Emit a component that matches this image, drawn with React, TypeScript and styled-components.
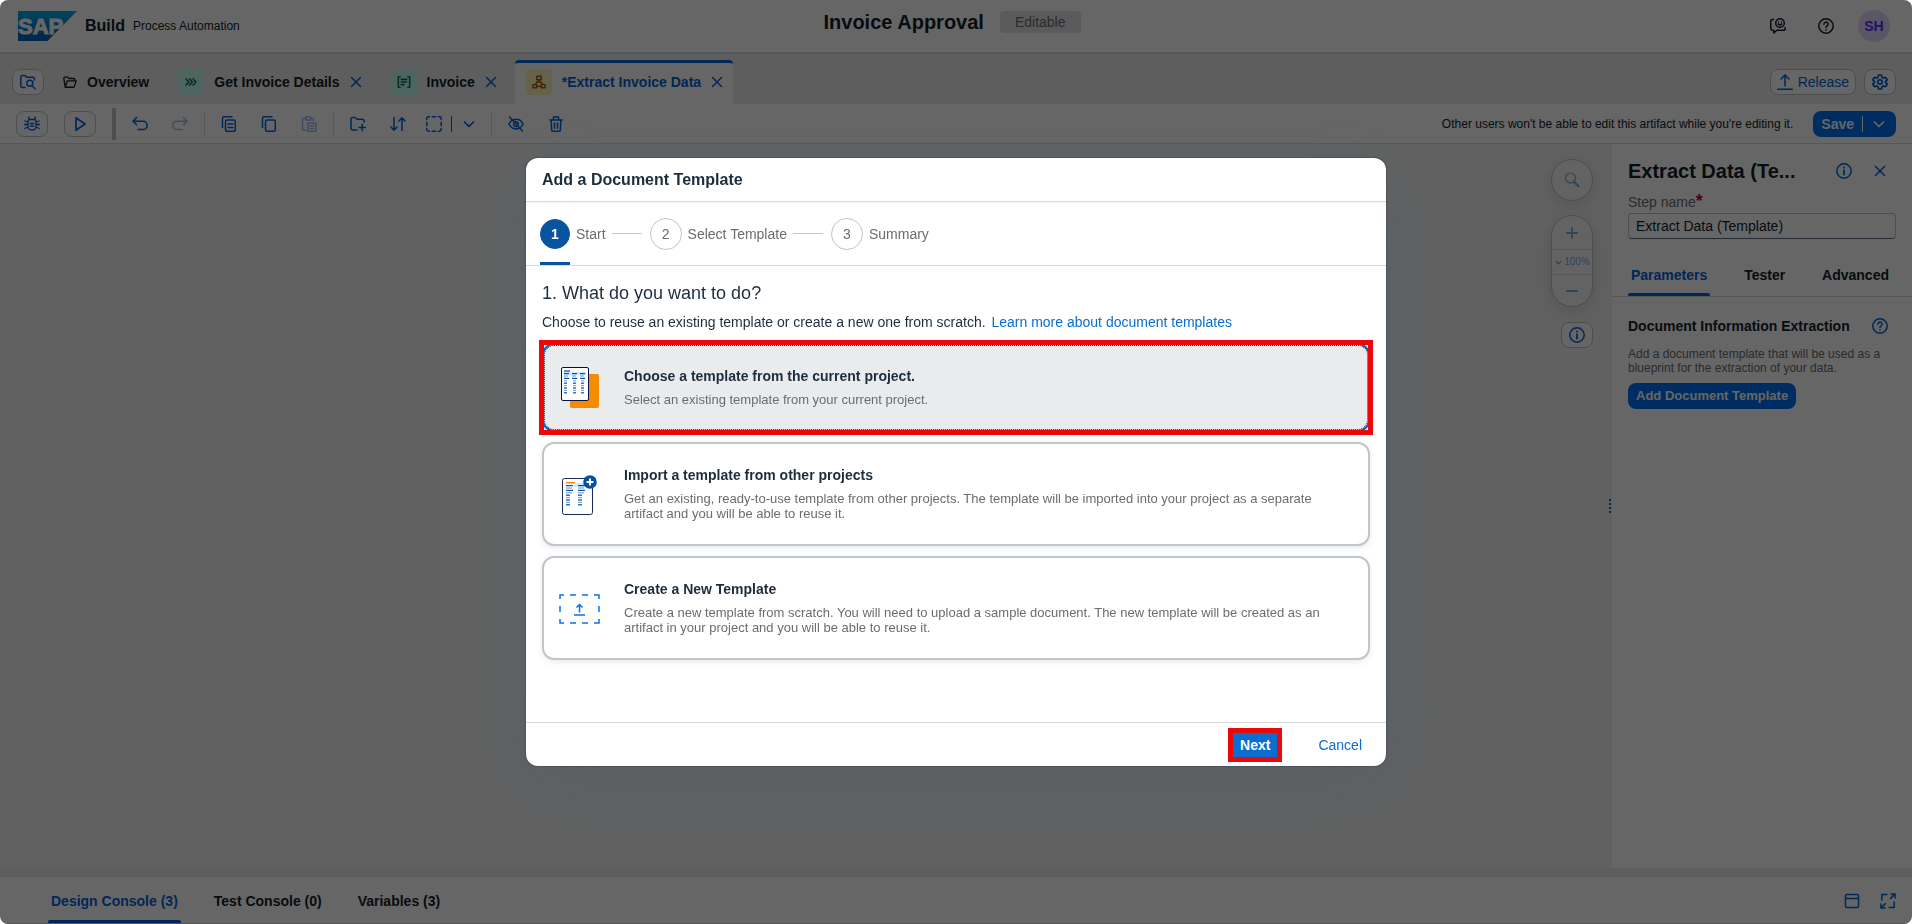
import React from 'react';
import styled, { createGlobalStyle, css } from 'styled-components';

const color = {
  text: '#131e29',
  link: '#0064d9',
  label: '#6a6d70',
  line: '#d9d9d9',
  buttonBorder: '#bcc3ca',
  shell: '#ebebeb',
  canvas: '#f2f2f2',
};

const GlobalStyle = createGlobalStyle`
  *, *::before, *::after { box-sizing: border-box; }
  body {
    margin: 0;
    background: #fff;
    color: ${color.text};
    font: 14px/16px "Liberation Sans", Arial, sans-serif;
  }
  button, input { font: inherit; color: inherit; margin: 0; }
  button { padding: 0; border: 0; background: none; cursor: pointer; }
  h1, h2, h3, p { margin: 0; font: inherit; }
`;

/* ---------- icons ---------- */

type IconProps = { size?: number; children: React.ReactNode; weight?: number };

const Icon = ({ size = 16, weight = 1.5, children }: IconProps) => (
  <svg
    width={size}
    height={size}
    viewBox="0 0 16 16"
    fill="none"
    stroke="currentColor"
    strokeWidth={weight}
    strokeLinecap="round"
    strokeLinejoin="round"
    aria-hidden="true"
  >
    {children}
  </svg>
);

const FolderSearchIcon = () => (
  <Icon>
    <path d="M5 13.500H2.200A1.400 1.400 0 0 1 .8 12V3A1.400 1.400 0 0 1 2.200 1.600H5L6.800 3.300H13A1.400 1.400 0 0 1 14.400 4.700V6" />
    <circle cx="9.800" cy="9.300" r="3" />
    <path d="M12 11.600 15.200 15" />
  </Icon>
);
const FolderOpenIcon = () => (
  <Icon size={14}>
    <path d="M2.500 14 1 4.500V3.500A1 1 0 0 1 2 2.500H5.500L7 4H12.500A1 1 0 0 1 13.500 5V6.500M2.500 14 4.500 7.500A1 1 0 0 1 5.500 6.700H15L13 13.300A1 1 0 0 1 12 14Z" />
  </Icon>
);
const ChevronsIcon = () => (
  <Icon size={14} weight={1.8}>
    <path d="M2.500 4.500 5.500 8 2.500 11.500M6.500 4.500 9.500 8 6.500 11.500M10.500 4.500 13.500 8 10.500 11.500" />
  </Icon>
);
const FormIcon = () => (
  <Icon size={14} weight={1.8}>
    <path d="M3.500 2H1.500V14H3.500M12.500 2H14.500V14H12.500M5 5H11M5 8H11M5 11H8" />
  </Icon>
);
const HierarchyIcon = () => (
  <Icon size={14} weight={1.7}>
    <path d="M5.500 1.500H10.500V5.500H5.500ZM1 11H5.500V14.500H1ZM10.500 11H15V14.500H10.500ZM8 5.500V8M8 8H6L3.500 11M8 8H10L12.500 11M5.500 13H10.500" />
  </Icon>
);
const CloseIcon = () => (
  <Icon size={12} weight={2}>
    <path d="M2 2 14 14M14 2 2 14" />
  </Icon>
);
const FeedbackIcon = () => (
  <Icon>
    <circle cx="10" cy="5" r="4.300" />
    <path d="M8.600 4V4.100M11.400 4V4.100M8.300 5.900Q10 7.800 11.700 5.900M3.500 1.500H2.300A1.600 1.600 0 0 0 .8 3V10.800A1.600 1.600 0 0 0 2.300 12.300H3.800V15L6.800 12.300H13.500A1.600 1.600 0 0 0 15.200 10.700V9.500" />
  </Icon>
);
const HelpIcon = () => (
  <Icon>
    <circle cx="8" cy="8" r="7.200" />
    <path d="M5.900 6.300A2.100 2.100 0 1 1 8.900 8.100Q8 8.600 8 9.500M8 11.700V11.900" />
  </Icon>
);
const InfoIcon = () => (
  <Icon>
    <circle cx="8" cy="8" r="7.200" />
    <path d="M8 7.500V11.600M8 4.500V4.700" strokeWidth="1.800" />
  </Icon>
);
const ReleaseIcon = () => (
  <Icon>
    <path d="M.8 15.300H15.200M8 12V1M4 5 8 .9 12 5" />
  </Icon>
);
const SettingsIcon = () => (
  <Icon weight={1.7}>
    <path d="M6.500 1H9.500L10 3.200 11.500 4.100 13.700 3.400 15.200 6 13.500 7.500V8.500L15.200 10 13.700 12.600 11.500 11.900 10 12.800 9.500 15H6.500L6 12.800 4.500 11.900 2.300 12.600 .8 10 2.500 8.500V7.500L.8 6 2.300 3.400 4.500 4.100 6 3.200Z" />
    <circle cx="8" cy="8" r="2.200" />
  </Icon>
);
const BugIcon = () => (
  <Icon weight={1.3}>
    <path d="M4 5.500Q4 3.500 6 3.500H10Q12 3.500 12 5.500V10.500Q12 14 8 14Q4 14 4 10.500ZM5.500 3.500 4.500 1M10.500 3.500 11.500 1M.8 5 4 6M15.200 5 12 6M.5 8.500H4M15.500 8.500H12M.8 12.500 4 11M15.200 12.500 12 11M6.300 7.500H9.700M6.300 10H9.700" />
  </Icon>
);
const PlayIcon = () => (
  <Icon weight={1.7}>
    <path d="M4 1.800V14.200L13 8Z" />
  </Icon>
);
const UndoIcon = () => (
  <Icon>
    <path d="M4.500 1.500 1 5.200 4.500 8.800M1 5.200H11A4 4 0 0 1 11 13.600H6" />
  </Icon>
);
const RedoIcon = () => (
  <Icon>
    <path d="M11.500 1.500 15 5.200 11.500 8.800M15 5.200H5A4 4 0 0 0 5 13.600H10" />
  </Icon>
);
const CopyDetailIcon = () => (
  <Icon>
    <rect x="4.500" y="4" width="9.800" height="11.200" rx="1.500" />
    <path d="M1.500 11.500V2.500Q1.500.8 3.200.8H11M7 8H12M7 11.500H12" />
  </Icon>
);
const CopyIcon = () => (
  <Icon>
    <rect x="4.500" y="4" width="9.800" height="11.200" rx="1.500" />
    <path d="M1.500 11.500V2.500Q1.500.8 3.200.8H11" />
  </Icon>
);
const PasteIcon = () => (
  <Icon>
    <path d="M4.500 14.300H2.500A1 1 0 0 1 1.500 13.300V3.500A1 1 0 0 1 2.500 2.500H4.500M10 2.500H11.500A1 1 0 0 1 12.500 3.500V4.500M4.800 1H9.800V4H4.800ZM7 7H14.800V15.200H7ZM9.300 9.800H12.500M9.300 12.400H12.500" />
  </Icon>
);
const FolderAddIcon = () => (
  <Icon>
    <path d="M7 14H2.500A1.500 1.500 0 0 1 1 12.500V3A1.500 1.500 0 0 1 2.500 1.500H5L7 3.300H12.500A1.500 1.500 0 0 1 14 4.800V6M9 11.500H15.500M12.200 8.300V14.800" />
  </Icon>
);
const SortIcon = () => (
  <Icon>
    <path d="M4 1.500V14M1 11 4 14.200 7 11M12 14.500V2M9 5 12 1.800 15 5" />
  </Icon>
);
const SelectionIcon = () => (
  <Icon>
    <path d="M.8 3.500V2.500A1.700 1.700 0 0 1 2.500.8H3.500M6.300 .8H9.700M12.500.8H13.500A1.700 1.700 0 0 1 15.200 2.500V3.500M15.200 6.300V9.700M15.200 12.500V13.500A1.700 1.700 0 0 1 13.500 15.200H12.500M9.700 15.200H6.300M3.500 15.200H2.500A1.700 1.700 0 0 1 .8 13.500V12.500M.8 9.700V6.300" />
  </Icon>
);
const ChevronDownIcon = ({ size = 16, weight = 1.7 }: { size?: number; weight?: number }) => (
  <Icon size={size} weight={weight}>
    <path d="M3.500 6 8 10.500 12.500 6" />
  </Icon>
);
const HideIcon = () => (
  <Icon>
    <path d="M1.500 1 14.500 15M5.500 3.800Q12 1.500 15 8Q14.300 9.800 13 11M3.300 5Q1.800 6.300 1 8Q4.300 14.300 10.500 12.500M7.300 5.800A2.400 2.400 0 0 1 10.300 8.600M5.700 7.500A2.400 2.400 0 0 0 8.800 10.400" />
  </Icon>
);
const TrashIcon = () => (
  <Icon>
    <path d="M2 4H14M5.500 4V1H10.500V4M3.200 4 3.600 14A1.200 1.200 0 0 0 4.800 15.200H11.200A1.200 1.200 0 0 0 12.400 14L12.800 4M6.500 7V12.300M9.500 7V12.300" />
  </Icon>
);
const SearchIcon = () => (
  <Icon weight={1.2}>
    <circle cx="6.500" cy="6" r="5" />
    <path d="M10 9.800 14.500 14.300" strokeWidth="2.200" />
  </Icon>
);
const PlusIcon = () => (
  <Icon weight={1.8}>
    <path d="M3 8H13M8 3V13" />
  </Icon>
);
const MinusIcon = () => (
  <Icon weight={1.8}>
    <path d="M3 8H13" />
  </Icon>
);
const DockIcon = () => (
  <Icon>
    <path d="M1.500 3A1.500 1.500 0 0 1 3 1.500H13A1.500 1.500 0 0 1 14.500 3V13A1.500 1.500 0 0 1 13 14.500H3A1.500 1.500 0 0 1 1.500 13ZM1.500 5.500H14.500" />
  </Icon>
);
const FullScreenIcon = () => (
  <Icon>
    <path d="M7 1.500H1.800V7M9 14.500H14.200V9M10.500 5.500 15 1M11 1H15V5M5.500 10.500 1 15M1 11V15H5" />
  </Icon>
);

const SapLogo = () => (
  <svg width="59" height="30" viewBox="0 0 59 30" role="img" aria-label="SAP">
    <defs>
      <linearGradient id="sap" x1="0" y1="0" x2="0" y2="1">
        <stop offset="0" stopColor="#00aeef" />
        <stop offset="1" stopColor="#005eb8" />
      </linearGradient>
    </defs>
    <path d="M0 0H59L29.500 30H0Z" fill="url(#sap)" />
    <text x="0" y="23" fill="#fff" stroke="#fff" strokeWidth="1" fontSize="22" fontWeight="700">SAP</text>
  </svg>
);

const rowY = [0, 1, 2, 3, 4, 5, 6, 7, 8];

const TemplateIcon = () => (
  <svg width="48" height="48" viewBox="0 0 48 48" aria-hidden="true">
    <rect x="14" y="10" width="29" height="34" rx="2" fill="#f58b00" />
    <rect x="5.500" y="3.500" width="27" height="33" rx="1.500" fill="#fff" stroke="#00144a" />
    <rect x="8" y="6" width="6" height="2" fill="#5b8fd0" />
    <rect x="8" y="8" width="22" height="3" fill="#cfeafc" />
    {[8, 16, 24].map((x) =>
      rowY.map((r) => (
        <rect key={`${x}-${r}`} x={x + (x > 8 && r > 2 ? 1 : 0)} y={9 + r * 2.4} width={r < 3 ? 5 - (r % 2) : 3} height="1.200" fill={r % 2 ? '#7aa5d8' : '#0a50a0'} />
      )),
    )}
  </svg>
);
const ImportIcon = () => (
  <svg width="48" height="48" viewBox="0 0 48 48" aria-hidden="true">
    <rect x="6.500" y="8.500" width="30" height="36" rx="2" fill="#fff" stroke="#1b2a5c" />
    <rect x="10" y="12" width="9" height="1.500" fill="#f58b00" />
    <rect x="18" y="13" width="10" height="4" fill="#cfeafc" />
    {[10, 22].map((x) =>
      rowY.map((r) => (
        <rect key={`${x}-${r}`} x={x} y={15 + r * 2.4} width={r < 4 ? 7 - (r % 2) : 4} height="1.200" fill={r % 2 ? '#7aa5d8' : '#0a50a0'} />
      )),
    )}
    <circle cx="34" cy="12" r="6.800" fill="#0050a8" />
    <path d="M34 8.500V15.500M30.500 12H37.500" stroke="#fff" strokeWidth="2" />
  </svg>
);
const UploadIcon = () => (
  <svg width="48" height="48" viewBox="0 0 48 48" fill="none" stroke="#0a72e8" strokeWidth="1.500" aria-hidden="true">
    <path d="M4 15V11H8M14 11H20M26 11H32M38 11H43V15M43 22V28M43 35V39H38M32 39H26M20 39H14M8 39H4V35M4 28V22M18 31H29M23.500 28.500V21M20.500 23.500 23.500 20.500 26.500 23.500" />
  </svg>
);

/* ---------- application shell ---------- */

const Shell = styled.div`
  min-height: 100vh;
  display: flex;
  flex-direction: column;
  border-radius: 8px;
  overflow: hidden;
  background: ${color.shell};
`;

const Header = styled.header`
  height: 54px;
  padding: 0 22px 1px 18px;
  display: grid;
  grid-template-columns: 1fr auto 1fr;
  align-items: center;
  background: #fff;
  border-bottom: 2px solid #d6d6d6;
`;

const Brand = styled.div`
  display: flex;
  align-items: center;
  gap: 8px;
`;

const BrandName = styled.span`
  font-size: 16px;
  font-weight: 700;
`;

const BrandProduct = styled.span`
  font-size: 12px;
`;

const ProjectTitle = styled.div`
  align-self: start;
  padding: 11px 4px 0 0;
  display: flex;
  align-items: center;
  gap: 16px;
`;

const Title = styled.h1`
  font-size: 20px;
  line-height: 22px;
  font-weight: 700;
`;

const Badge = styled.span`
  padding: 3px 15px;
  border-radius: 4px;
  background: #e3e3e3;
  color: ${color.label};
`;

const HeaderActions = styled.div`
  display: flex;
  justify-content: flex-end;
  align-items: center;
  gap: 16px;
`;

const Avatar = styled.button`
  width: 32px;
  height: 32px;
  border-radius: 50%;
  background: #e2d8ff;
  color: #552cff;
  font-weight: 700;
`;

const IconButton = styled.button<{ $outlined?: boolean; $tone?: string }>`
  width: 32px;
  height: 26px;
  flex: none;
  display: inline-flex;
  align-items: center;
  justify-content: center;
  color: ${(p) => p.$tone ?? color.link};
  border-radius: 8px;
  ${(p) => p.$outlined && css`
    background: #fff;
    border: 1px solid ${color.buttonBorder};
  `}
  &:disabled { opacity: 0.4; }
`;

const BareIconButton = styled.button`
  display: flex;
  color: ${color.link};
`;

/* ---------- artifact tabs ---------- */

const TabBar = styled.nav`
  height: 50px;
  padding: 6px 16px 0 12px;
  display: flex;
  align-items: stretch;
`;

const CenteredGroup = styled.div<{ $gap: number }>`
  display: flex;
  align-items: center;
  gap: ${(p) => p.$gap}px;
`;

const Tabs = styled.div`
  flex: 1;
  display: flex;
  gap: 8px;
  padding-left: 8px;
`;

const Tab = styled.div<{ $active?: boolean }>`
  display: flex;
  align-items: center;
  gap: 10px;
  padding: 0 10px 0 11px;
  border-radius: 4px 4px 0 0;
  border-top: 3px solid ${(p) => (p.$active ? color.link : 'transparent')};
  border-bottom: 3px solid transparent;
  background: ${(p) => (p.$active ? '#fff' : 'transparent')};
  color: ${(p) => (p.$active ? color.link : color.text)};
`;

const TabLabel = styled.button`
  display: flex;
  align-items: center;
  gap: 10px;
  font-weight: 700;
`;

const badgeTone = {
  mint: ['#c2fcee', '#036c62'],
  yellow: ['#fff3b8', '#a45d00'],
};

const TypeBadge = styled.span<{ $tone: keyof typeof badgeTone }>`
  width: 26px;
  height: 26px;
  display: grid;
  place-items: center;
  border-radius: 4px;
  background: ${(p) => badgeTone[p.$tone][0]};
  color: ${(p) => badgeTone[p.$tone][1]};
`;

const OutlinedButton = styled.button`
  height: 26px;
  padding: 0 6px;
  display: flex;
  align-items: center;
  gap: 5px;
  border: 1px solid ${color.buttonBorder};
  border-radius: 8px;
  background: #fff;
  color: ${color.link};
`;

/* ---------- toolbar ---------- */

const Toolbar = styled.div`
  height: 40px;
  padding: 0 16px;
  display: flex;
  align-items: center;
  gap: 8px;
  background: #fff;
  border-bottom: 1px solid ${color.line};
`;

const RunGroup = styled.div`
  display: flex;
  align-items: center;
  gap: 16px;
`;

const Grip = styled.span`
  width: 4px;
  height: 32px;
  background: #c4c4c4;
`;

const Separator = styled.span`
  width: 1px;
  height: 24px;
  background: ${color.line};
`;

const SplitButton = styled.div`
  display: flex;
  align-items: center;
  gap: 9px;
  padding: 0 6px 0 4px;
  color: ${color.link};
`;

const SplitPart = styled.button`
  display: flex;
  align-items: center;
`;

const SplitLine = styled.span`
  width: 1px;
  height: 16px;
  background: currentColor;
`;

const Notice = styled.p`
  flex: 1;
  padding-right: 12px;
  font-size: 12px;
  text-align: right;
`;

const SaveButton = styled.div`
  height: 26px;
  padding: 0 9px 0 8px;
  display: flex;
  align-items: center;
  gap: 8px;
  border-radius: 8px;
  background: #0070f2;
  color: #fff;
  font-weight: 700;
`;

/* ---------- workspace ---------- */

const Workspace = styled.main`
  flex: 1;
  display: flex;
`;

const Canvas = styled.section`
  flex: 1;
  display: flex;
  justify-content: flex-end;
  background: ${color.canvas};
`;

const CanvasTools = styled.div`
  display: flex;
  flex-direction: column;
  align-items: flex-end;
  padding: 15px 16px 0 0;
`;

const SearchButton = styled.button`
  width: 42px;
  height: 42px;
  margin-bottom: 14px;
  display: grid;
  place-items: center;
  border: 1px solid ${color.buttonBorder};
  border-radius: 50%;
  background: #f7f7f7;
  color: #7ba7dd;
  box-shadow: 0 4px 16px rgba(34, 53, 72, 0.15);
`;

const ZoomControl = styled.div`
  width: 42px;
  margin-bottom: 15px;
  display: flex;
  flex-direction: column;
  border: 1px solid ${color.buttonBorder};
  border-radius: 21px;
  background: #f7f7f7;
  color: #7ba7dd;
  box-shadow: 0 4px 16px rgba(34, 53, 72, 0.15);
`;

const ZoomButton = styled.button<{ $height: number }>`
  height: ${(p) => p.$height}px;
  display: flex;
  align-items: center;
  justify-content: center;
  gap: 1px;
  font-size: 10px;
  & + & { border-top: 1px solid ${color.line}; }
`;

const Splitter = styled.div`
  width: 3px;
  align-self: center;
  display: flex;
  flex-direction: column;
  gap: 2px;
`;

const Dot = styled.span`
  width: 2px;
  height: 2px;
  background: ${color.link};
`;

const Panel = styled.aside`
  width: 300px;
  flex: none;
  background: #fff;
`;

const PanelHead = styled.div`
  padding: 14px 16px 0;
`;

const PanelTitleRow = styled.div`
  display: flex;
  align-items: center;
  gap: 4px;
`;

const PanelTitle = styled.h2`
  flex: 1;
  font-size: 20px;
  line-height: 26px;
  font-weight: 700;
`;

const FieldLabel = styled.label`
  display: block;
  margin: 11px 0 3px;
  color: ${color.label};
  line-height: 15px;
`;

const Required = styled.span`
  color: #aa0840;
  font-size: 18px;
  line-height: 12px;
  font-weight: 700;
`;

const TextInput = styled.input`
  width: 100%;
  height: 26px;
  padding: 0 7px;
  border: 1px solid ${color.buttonBorder};
  border-bottom-color: #556b81;
  border-radius: 4px;
  background: #fff;
`;

const PanelTabs = styled.div`
  margin-top: 14px;
  padding: 0 20px 0 16px;
  height: 44px;
  display: flex;
  justify-content: space-between;
  border-bottom: 1px solid ${color.line};
`;

const UnderlineTab = styled.button<{ $active?: boolean }>`
  position: relative;
  padding: 0 3px;
  font-weight: 700;
  color: ${(p) => (p.$active ? color.link : color.text)};
  &::after {
    content: '';
    position: absolute;
    inset: auto 0 0;
    height: 3px;
    border-radius: 2px 2px 0 0;
    background: ${(p) => (p.$active ? color.link : 'transparent')};
  }
`;

const PanelBody = styled.div`
  padding: 19px 16px;
`;

const SectionRow = styled.div`
  display: flex;
  align-items: center;
  justify-content: space-between;
  height: 20px;
  padding-right: 8px;
`;

const SectionTitle = styled.h3`
  font-weight: 700;
`;

const SectionText = styled.p`
  margin: 11px 0 8px;
  font-size: 12px;
  line-height: 14px;
  color: ${color.label};
`;

const PrimaryButton = styled.button`
  position: relative;
  height: 26px;
  padding: 0 8px;
  border-radius: 8px;
  background: #0070f2;
  color: #fff;
  font-size: 13px;
  font-weight: 700;
`;

/* ---------- console ---------- */

const ConsoleBar = styled.footer`
  height: 47px;
  margin-top: 9px;
  padding: 2px 16px 0 48px;
  display: flex;
  justify-content: space-between;
  background: #fff;
  border-bottom: 1px solid ${color.line};
`;

const ConsoleTabs = styled.div`
  display: flex;
  gap: 30px;
`;

/* ---------- dialog ---------- */

const Overlay = styled.div`
  position: fixed;
  inset: 0;
  display: grid;
  place-items: center;
  border-radius: 8px;
  background: rgba(0, 0, 0, 0.6);
`;

const Dialog = styled.section`
  width: min(860px, 94vw);
  border-radius: 12px;
  background: #fff;
  color: #1d2d3e;
  box-shadow: 0 0 2px rgba(34, 53, 72, 0.9), 0 20px 80px rgba(70, 88, 105, 0.3);
`;

const DialogHeader = styled.header`
  height: 44px;
  padding: 0 16px;
  display: flex;
  align-items: center;
  border-bottom: 1px solid ${color.line};
  box-shadow: 0 2px 2px rgba(0, 0, 0, 0.03);
`;

const DialogTitle = styled.h2`
  font-size: 16px;
  font-weight: 700;
`;

const Steps = styled.ol`
  height: 64px;
  margin: 0;
  padding: 0 14px;
  display: flex;
  list-style: none;
  border-bottom: 1px solid ${color.line};
`;

const Step = styled.li`
  display: flex;
  align-items: center;
  gap: 6px;
  color: ${color.label};
  &:not(:last-child)::after {
    content: '';
    width: 30px;
    height: 1px;
    margin-right: 8px;
    background: #c8c8c8;
  }
`;

const StepMark = styled.span<{ $active?: boolean }>`
  height: 100%;
  display: flex;
  align-items: center;
  border-bottom: 3px solid ${(p) => (p.$active ? '#0854a0' : 'transparent')};
  border-top: 3px solid transparent;
`;

const StepNumber = styled.span<{ $active?: boolean }>`
  width: ${(p) => (p.$active ? 30 : 32)}px;
  height: ${(p) => (p.$active ? 30 : 32)}px;
  display: grid;
  place-items: center;
  border-radius: 50%;
  border: 1px solid ${(p) => (p.$active ? '#0854a0' : '#c4c4c4')};
  background: ${(p) => (p.$active ? '#0854a0' : '#fff')};
  color: ${(p) => (p.$active ? '#fff' : color.label)};
  font-weight: ${(p) => (p.$active ? 700 : 400)};
`;

const DialogBody = styled.div`
  padding: 16px 16px 62px;
`;

const Question = styled.h3`
  font-size: 18px;
  line-height: 22px;
`;

const Intro = styled.p`
  margin: 10px 0 13px;
`;

const Link = styled.a`
  margin-left: 2px;
  color: #0a6ed1;
  text-decoration: none;
`;

const Options = styled.div`
  display: flex;
  flex-direction: column;
  gap: 10px;
`;

const highlight = css`
  &::after {
    content: '';
    position: absolute;
    border: 5px solid #eb0808;
    pointer-events: none;
  }
`;

const Option = styled.button<{ $selected?: boolean }>`
  position: relative;
  min-height: ${(p) => (p.$selected ? 89 : 104)}px;
  padding: 0 40px 0 12px;
  display: flex;
  align-items: center;
  gap: 20px;
  text-align: left;
  border: 2px solid ${(p) => (p.$selected ? color.link : '#c2c6cc')};
  border-radius: 12px;
  background: ${(p) => (p.$selected ? '#eaebed' : '#fff')};
  box-shadow: 0 2px 6px rgba(34, 53, 72, 0.1);
  ${(p) => p.$selected && css`
    ${highlight}
    &::before {
      content: '';
      position: absolute;
      inset: 0;
      border: 1px dotted #222;
      border-radius: 10px;
    }
    &::after { inset: -5px; }
  `}
  svg { flex: none; }
`;

const OptionText = styled.span`
  display: flex;
  flex-direction: column;
  gap: 8px;
`;

const OptionTitle = styled.span`
  font-weight: 700;
`;

const OptionNote = styled.span`
  font-size: 13px;
  line-height: 15px;
  color: ${color.label};
`;

const DialogFooter = styled.footer`
  height: 44px;
  padding: 0 16px;
  display: flex;
  align-items: center;
  justify-content: flex-end;
  gap: 32px;
  border-top: 1px solid ${color.line};
`;

const NextButton = styled(PrimaryButton)`
  padding: 0 8px;
  border-radius: 4px;
  background: #0a6ed1;
  font-size: 14px;
  ${highlight}
  &::after { inset: -4px; }
`;

const CancelButton = styled.button`
  height: 26px;
  padding: 0 8px;
  color: #0a6ed1;
`;

const tabs = [
  { label: 'Get Invoice Details', tone: 'mint' as const, icon: <ChevronsIcon /> },
  { label: 'Invoice', tone: 'mint' as const, icon: <FormIcon /> },
  { label: '*Extract Invoice Data', tone: 'yellow' as const, icon: <HierarchyIcon />, active: true },
];

const steps = ['Start', 'Select Template', 'Summary'];

const options = [
  {
    title: 'Choose a template from the current project.',
    note: 'Select an existing template from your current project.',
    icon: <TemplateIcon />,
    selected: true,
  },
  {
    title: 'Import a template from other projects',
    note: 'Get an existing, ready-to-use template from other projects. The template will be imported into your project as a separate artifact and you will be able to reuse it.',
    icon: <ImportIcon />,
  },
  {
    title: 'Create a New Template',
    note: 'Create a new template from scratch. You will need to upload a sample document. The new template will be created as an artifact in your project and you will be able to reuse it.',
    icon: <UploadIcon />,
  },
];

const TemplateDialog = () => (
  <Overlay>
    <Dialog role="dialog" aria-modal="true" aria-labelledby="dialog-title">
      <DialogHeader>
        <DialogTitle id="dialog-title">Add a Document Template</DialogTitle>
      </DialogHeader>
      <Steps>
        {steps.map((name, i) => (
          <Step key={name} aria-current={i === 0 ? 'step' : undefined}>
            <StepMark $active={i === 0}>
              <StepNumber $active={i === 0}>{i + 1}</StepNumber>
            </StepMark>
            {name}
          </Step>
        ))}
      </Steps>
      <DialogBody>
        <Question>1. What do you want to do?</Question>
        <Intro>
          Choose to reuse an existing template or create a new one from scratch.{' '}
          <Link href="#learn-more">Learn more about document templates</Link>
        </Intro>
        <Options>
          {options.map((o) => (
            <Option key={o.title} $selected={o.selected} aria-pressed={!!o.selected}>
              {o.icon}
              <OptionText>
                <OptionTitle>{o.title}</OptionTitle>
                <OptionNote>{o.note}</OptionNote>
              </OptionText>
            </Option>
          ))}
        </Options>
      </DialogBody>
      <DialogFooter>
        <NextButton>Next</NextButton>
        <CancelButton>Cancel</CancelButton>
      </DialogFooter>
    </Dialog>
  </Overlay>
);

export default function App() {
  return (
    <>
      <GlobalStyle />
      <Shell>
        <Header>
          <Brand>
            <SapLogo />
            <BrandName>Build</BrandName>
            <BrandProduct>Process Automation</BrandProduct>
          </Brand>
          <ProjectTitle>
            <Title>Invoice Approval</Title>
            <Badge>Editable</Badge>
          </ProjectTitle>
          <HeaderActions>
            <IconButton aria-label="Feedback" $tone={color.text}><FeedbackIcon /></IconButton>
            <IconButton aria-label="Help" $tone={color.text}><HelpIcon /></IconButton>
            <Avatar aria-label="Profile SH">SH</Avatar>
          </HeaderActions>
        </Header>

        <TabBar>
          <CenteredGroup $gap={8}>
            <IconButton $outlined aria-label="Browse artifacts"><FolderSearchIcon /></IconButton>
          </CenteredGroup>
          <Tabs>
            <Tab>
              <TabLabel><FolderOpenIcon />Overview</TabLabel>
            </Tab>
            {tabs.map((t) => (
              <Tab key={t.label} $active={t.active}>
                <TabLabel>
                  <TypeBadge $tone={t.tone}>{t.icon}</TypeBadge>
                  {t.label}
                </TabLabel>
                <BareIconButton aria-label={`Close ${t.label}`}><CloseIcon /></BareIconButton>
              </Tab>
            ))}
          </Tabs>
          <CenteredGroup $gap={8}>
            <OutlinedButton><ReleaseIcon />Release</OutlinedButton>
            <IconButton $outlined aria-label="Settings"><SettingsIcon /></IconButton>
          </CenteredGroup>
        </TabBar>

        <Toolbar>
          <RunGroup>
            <IconButton $outlined aria-label="Debug"><BugIcon /></IconButton>
            <IconButton $outlined aria-label="Run"><PlayIcon /></IconButton>
            <Grip />
          </RunGroup>
          <IconButton aria-label="Undo"><UndoIcon /></IconButton>
          <IconButton aria-label="Redo" disabled><RedoIcon /></IconButton>
          <Separator />
          <IconButton aria-label="Duplicate"><CopyDetailIcon /></IconButton>
          <IconButton aria-label="Copy"><CopyIcon /></IconButton>
          <IconButton aria-label="Paste" disabled><PasteIcon /></IconButton>
          <Separator />
          <IconButton aria-label="Add group"><FolderAddIcon /></IconButton>
          <IconButton aria-label="Reorder"><SortIcon /></IconButton>
          <SplitButton>
            <SplitPart aria-label="Select area"><SelectionIcon /></SplitPart>
            <SplitLine />
            <SplitPart aria-label="More selection options"><ChevronDownIcon /></SplitPart>
          </SplitButton>
          <Separator />
          <IconButton aria-label="Hide"><HideIcon /></IconButton>
          <IconButton aria-label="Delete"><TrashIcon /></IconButton>
          <Notice>Other users won't be able to edit this artifact while you're editing it.</Notice>
          <SaveButton>
            <SplitPart>Save</SplitPart>
            <SplitLine />
            <SplitPart aria-label="More save options"><ChevronDownIcon /></SplitPart>
          </SaveButton>
        </Toolbar>

        <Workspace>
          <Canvas>
            <CanvasTools>
              <SearchButton aria-label="Search"><SearchIcon /></SearchButton>
              <ZoomControl>
                <ZoomButton $height={33} aria-label="Zoom in"><PlusIcon /></ZoomButton>
                <ZoomButton $height={25}><ChevronDownIcon size={9} weight={2.4} />100%</ZoomButton>
                <ZoomButton $height={32} aria-label="Zoom out"><MinusIcon /></ZoomButton>
              </ZoomControl>
              <IconButton $outlined aria-label="Canvas information"><InfoIcon /></IconButton>
            </CanvasTools>
            <Splitter><Dot /><Dot /><Dot /><Dot /></Splitter>
          </Canvas>
          <Panel>
            <PanelHead>
              <PanelTitleRow>
                <PanelTitle>Extract Data (Te...</PanelTitle>
                <IconButton aria-label="Step information"><InfoIcon /></IconButton>
                <IconButton aria-label="Close panel"><CloseIcon /></IconButton>
              </PanelTitleRow>
              <FieldLabel htmlFor="step-name">Step name<Required>*</Required></FieldLabel>
              <TextInput id="step-name" defaultValue="Extract Data (Template)" />
            </PanelHead>
            <PanelTabs>
              <UnderlineTab $active>Parameters</UnderlineTab>
              <UnderlineTab>Tester</UnderlineTab>
              <UnderlineTab>Advanced</UnderlineTab>
            </PanelTabs>
            <PanelBody>
              <SectionRow>
                <SectionTitle>Document Information Extraction</SectionTitle>
                <BareIconButton aria-label="Extraction help"><HelpIcon /></BareIconButton>
              </SectionRow>
              <SectionText>
                Add a document template that will be used as a blueprint for the extraction of your data.
              </SectionText>
              <PrimaryButton>Add Document Template</PrimaryButton>
            </PanelBody>
          </Panel>
        </Workspace>

        <ConsoleBar>
          <ConsoleTabs>
            <UnderlineTab $active>Design Console (3)</UnderlineTab>
            <UnderlineTab>Test Console (0)</UnderlineTab>
            <UnderlineTab>Variables (3)</UnderlineTab>
          </ConsoleTabs>
          <CenteredGroup $gap={20}>
            <BareIconButton aria-label="Dock console"><DockIcon /></BareIconButton>
            <BareIconButton aria-label="Full screen"><FullScreenIcon /></BareIconButton>
          </CenteredGroup>
        </ConsoleBar>
      </Shell>
      <TemplateDialog />
    </>
  );
}
